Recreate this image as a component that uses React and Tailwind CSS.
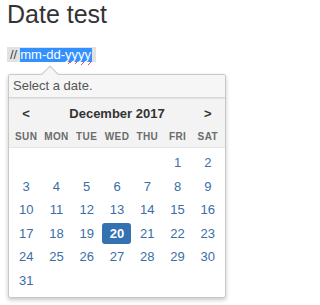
import React from "react";

const days = ["SUN", "MON", "TUE", "WED", "THU", "FRI", "SAT"];

function buildWeeks() {
  const cells = [null, null, null, null, null];
  for (let d = 1; d <= 31; d++) cells.push(d);
  while (cells.length % 7 !== 0) cells.push(null);
  const weeks = [];
  for (let i = 0; i < cells.length; i += 7) weeks.push(cells.slice(i, i + 7));
  return weeks;
}

export default function App() {
  const weeks = buildWeeks();
  return (
    <div className="w-[255px] h-[305px] bg-white overflow-hidden font-['Liberation_Sans',Arial,sans-serif] text-[#333]">
      <h1 className="ml-[7px] mt-[2px] text-[25px] leading-[25px] font-normal text-[#333]">Date test</h1>
      <div className="ml-[7px] mt-[20px] flex">
        <div className="flex items-center h-[15px] bg-[#e2e2e2] pl-[3px] pr-[4px] text-[13px] leading-[13px]">
          <span className="text-[#444]">//</span>
          <span className="ml-[3px] bg-[#3390ff] text-white h-[14px] flex items-center pr-[1px]">
            mm-dd-<span className="underline decoration-wavy decoration-[#e22] decoration-[1px] underline-offset-[2px]">yyyy</span>
          </span>
        </div>
      </div>
      <div className="relative ml-[8px] mt-[12px] w-[218px] border border-[#c8c8c8] rounded-[2px] shadow-[0_2px_4px_rgba(0,0,0,0.22)] bg-white">
        <div className="absolute left-[35px] top-[-7px] w-[12px] h-[12px] rotate-45 bg-[#f6f6f6] border-l border-t border-[#c8c8c8]" />
        <div className="relative bg-[#f6f6f6] h-[23px] flex items-center pl-[4px] text-[13px] text-[#555] border-b border-[#d8d8d8]">
          Select a date.
        </div>
        <div className="bg-[#f3f3f3] border-t border-[#e4e4e4] border-b border-[#dcdcdc] px-[2px]">
          <div className="grid grid-cols-7 pt-[4px] h-[26px] items-center text-[13px] font-bold text-[#333]">
            <div className="text-center">&lt;</div>
            <div className="col-span-5 text-center">December 2017</div>
            <div className="text-center">&gt;</div>
          </div>
          <div className="grid grid-cols-7 h-[22px] items-center text-[10px] font-bold tracking-[0.4px] text-[#6b6b6b]">
            {days.map((d) => (
              <div key={d} className="text-center">{d}</div>
            ))}
          </div>
        </div>
        <div className="px-[2px] pt-[3px] pb-[4px]">
          {weeks.map((w, i) => (
            <div key={i} className="grid grid-cols-7 h-[23.6px] items-center text-[13px] text-[#3a6ea8]">
              {w.map((d, j) => (
                <div key={j} className="flex justify-center">
                  {d === 20 ? (
                    <span className="w-[29px] h-[21px] rounded-[3px] bg-[#3371b1] text-white font-bold flex items-center justify-center">20</span>
                  ) : (
                    <span>{d ?? ""}</span>
                  )}
                </div>
              ))}
            </div>
          ))}
        </div>
      </div>
    </div>
  );
}
